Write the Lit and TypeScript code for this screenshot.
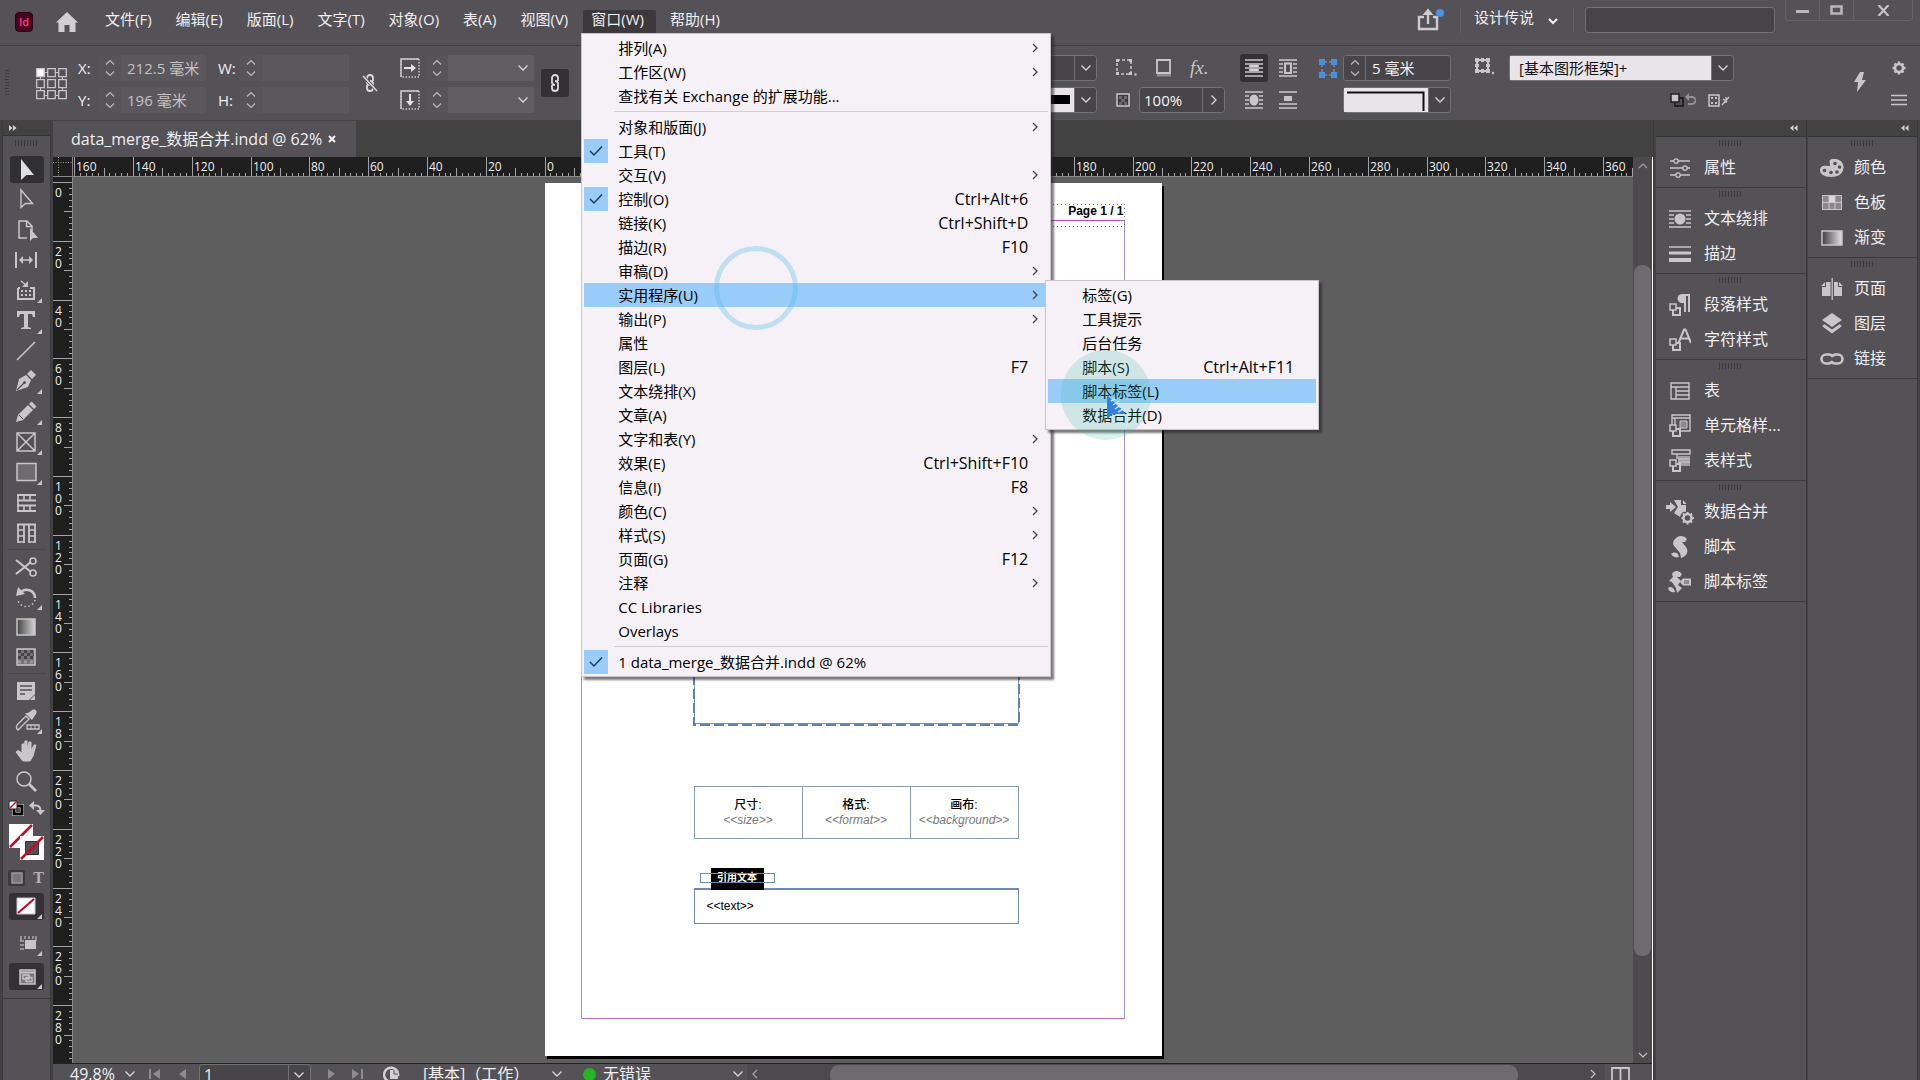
import { LitElement, html, svg, css, nothing, TemplateResult } from "lit";
import { customElement } from "lit/decorators.js";
import { classMap } from "lit/directives/class-map.js";

/* ---------- icons ---------- */
const icon = (w: number, h: number, body: unknown) =>
  html`<svg class="icon" width=${w} height=${h} viewBox="0 0 ${w} ${h}" fill="none" aria-hidden="true">${body}</svg>`;

const C = "#c9c6c9";
const chevDown = () => icon(12, 8, svg`<path d="M1.500 1.500 6 6 10.500 1.500" stroke="#d8d6d8" stroke-width="1.300"/>`);
const chevRight = () => icon(8, 12, svg`<path d="M1.500 1.500 6 6 1.500 10.500" stroke="#d8d6d8" stroke-width="1.300"/>`);
const steps = () => icon(10, 18, svg`<path d="M1 5.500 5 1.500 9 5.500M1 12.500 5 16.500 9 12.500" stroke="#bcbabc" stroke-width="1.200"/>`);
const menuArrow = () => icon(8, 10, svg`<path d="M2 1 6 5 2 9" stroke="#444" stroke-width="1.300"/>`);
const check = () => icon(14, 12, svg`<path d="M1 6 5 10 13 1.500" stroke="#1d3d5c" stroke-width="1.500"/>`);
const collapse = (flip = false) =>
  icon(8, 6, svg`<path d=${flip ? "M0 0 3.500 3 0 6ZM4 0 7.500 3 4 6Z" : "M3.500 0 0 3 3.500 6ZM7.500 0 4 3 7.500 6Z"} fill="#d5d3d5"/>`);
const corner = () => svg`<path d="M29 22V27H24Z" fill=${C}/>`;

const wrapLines = (mid: unknown) => svg`<path d="M0 1H18M0 17H18M0 5H4M14 5H18M0 9H4M14 9H18M0 13H4M14 13H18" stroke=${C} stroke-width="1.500"/>${mid}`;
const wrapOval = () => icon(18, 18, wrapLines(svg`<ellipse cx="9" cy="9" rx="4.500" ry="5.500" fill=${C}/>`));

/* overlapping squares used as a badge on every "style" panel icon */
const styleBadge = svg`<path d="M4 15H11V22H4Z" fill="#545256" stroke=${C} stroke-width="2"/><path d="M1 11H7V17H1Z" fill="#545256" stroke=${C} stroke-width="1.500"/>`;

const panelIcons: Record<string, TemplateResult> = {
  props: icon(22, 20, svg`<path d="M1 3H5M9 3H21M1 10H14M18 10H21M1 17H7M11 17H21" stroke=${C} stroke-width="1.300"/><circle cx="7" cy="3" r="2.200" stroke=${C} stroke-width="1.300"/><circle cx="16" cy="10" r="2.200" stroke=${C} stroke-width="1.300"/><circle cx="9" cy="17" r="2.200" stroke=${C} stroke-width="1.300"/>`),
  wrap: icon(22, 18, svg`<path d="M0 1H22M0 17H22M0 5H5M17 5H22M0 9H5M17 9H22M0 13H5M17 13H22" stroke=${C} stroke-width="1.500"/><circle cx="11" cy="9" r="5.500" fill=${C}/>`),
  stroke: icon(22, 16, svg`<path d="M0 1H22" stroke=${C} stroke-width="1.500"/><path d="M0 7H22" stroke=${C} stroke-width="3"/><path d="M0 14H22" stroke=${C} stroke-width="4"/>`),
  para: icon(22, 23, svg`<path d="M13 1H21V19H19V3H17V19H15V10H13A4.500 4.500 0 0 1 13 1Z" fill=${C}/>${styleBadge}`),
  char: icon(22, 23, svg`<path d="M9.500 15 15 1.500H16.500L22 15M11.500 10.500H20" stroke=${C} stroke-width="2"/>${styleBadge}`),
  table: icon(20, 18, svg`<path d="M1 1H19V17H1ZM1 5H19M6 5V17M6 9H19M6 13H19" stroke=${C} stroke-width="1.400"/>`),
  cell: icon(22, 23, svg`<path d="M3 1H21V17H3ZM3 4H21M6 4V17" stroke=${C} stroke-width="1.400"/><path d="M11 7H18V14H11Z" fill="#8b888b" stroke=${C}/>${styleBadge}`),
  tstyle: icon(22, 23, svg`<path d="M3 1H21V5H3ZM8 5V10" stroke=${C} stroke-width="1.400"/><path d="M9 7H21V17H9Z" fill="#a3a0a3"/><path d="M9 10H21M9 13H21" stroke=${C}/>${styleBadge}`),
  merge: icon(28, 26, svg`<path d="M0 6H4V3L10 8 4 13V10H0Z" fill=${C}/><path d="M8 1H15V6H20V13C17 12 15 14 14 18L8 14 12 8Z" fill=${C}/><path d="M17 1 20.500 5H17Z" fill=${C}/><circle cx="21.500" cy="19" r="4" stroke=${C} stroke-width="2.500"/><path d="M21.500 13V15M21.500 23V25.500M15.500 19H17.500M25.500 19H28M17 14.500 18.500 16M24.500 22 26 23.500M17 23.500 18.500 22M24.500 16 26 14.500" stroke=${C} stroke-width="2"/>`),
  script: icon(18, 22, svg`<path d="M4 3C7-1 13-1 16 3L14 6H11L15 11C18 15 16 20 10 22L9 17 4 11C1 8 2 5 4 3Z" fill=${C}/><path d="M0 18C2 16 5 16 7 18L8 21C5 22 2 21 0 18Z" fill=${C}/>`),
  slabel: icon(24, 22, svg`<path d="M4 3C6-1 11-1 14 3L12 6H9L13 10 10 14 14 17 9 22 8 17 4 11 1 10 5 6Z" fill=${C}/><path d="M0 17C2 15 4 16 6 18L7 21C4 22 1 21 0 17Z" fill=${C}/><path d="M12 11 15 7.500H23V14.500H15Z" fill=${C}/><path d="M16 10H21M16 12H21" stroke="#545256"/>`),
  color: icon(24, 18, svg`<path d="M12 0C19-1 24 3 23.500 9 23 15 18 18 11 18 4 18 0 15 0 11 0 7 4 6 8 7 11 7.500 10 5 9.500 3 9.200 1.500 10.500 .3 12 0Z" fill=${C}/><g fill="#545256"><circle cx="15" cy="4.500" r="1.800"/><circle cx="19.500" cy="8" r="1.800"/><circle cx="4.500" cy="11.500" r="1.800"/><circle cx="11" cy="13.500" r="1.800"/><circle cx="17" cy="13" r="1.800"/></g>`),
  swatch: icon(20, 15, svg`<path d="M.500.500H19.500V14.500H.500Z" fill="#8f858f" stroke=${C}/><path d="M7 1H13V7H7Z" fill="#dcd9dc"/><path d="M1 7.500H19M7 1V14M13 1V14" stroke=${C}/>`),
  gradient: icon(22, 16, svg`<defs><linearGradient id="pg"><stop offset="0" stop-color="#3f3e40"/><stop offset="1" stop-color="#e5e3e5"/></linearGradient></defs><path d="M1 1H21V15H1Z" fill="url(#pg)" stroke=${C} stroke-width="1.500"/>`),
  pages: icon(22, 22, svg`<path d="M5 4H9.500V18H1V9H5ZM13 4H17V9H21V18H13Z" fill=${C}/><path d="M4 4V8H0ZM18 4V8H22Z" fill=${C}/><path d="M11.200 0V22" stroke=${C} stroke-width="1.300"/>`),
  layers: icon(20, 21, svg`<path d="M10 0 20 7 10 14 0 7Z" fill=${C}/><path d="M0 13 2.500 11.300 10 16.500 17.500 11.300 20 13 10 20.500Z" fill=${C}/>`),
  links: icon(24, 12, svg`<path d="M13 4A4.500 4.500 0 0 0 9 1.500H6A4.500 4.500 0 0 0 6 10.500H9L11 9.500M11 8A4.500 4.500 0 0 0 15 10.500H18A4.500 4.500 0 0 0 18 1.500H15L12 3" stroke=${C} stroke-width="2.600"/>`),
};

const T = (body: unknown, flyout = false) =>
  html`<svg class="icon" width="34" height="28" viewBox="-3 0 34 28" fill="none" aria-hidden="true">${body}${flyout ? corner() : nothing}</svg>`;
/* tool glyphs are drawn around (13,14) */
const tools: Record<string, TemplateResult> = {
  select: T(svg`<path d="M8 3V24L13.500 19H21Z" fill="#e0dee0"/>`),
  direct: T(svg`<path d="M8 5V22.500L12.500 18.500H19.500Z" stroke=${C} stroke-width="1.400"/>`),
  page: T(svg`<path d="M14 22H6V5H14L19 10V15M13.500 5V10.500H19" stroke=${C} stroke-width="1.500"/><path d="M17 12V25L20 22H25Z" fill=${C}/>`),
  gap: T(svg`<path d="M3 6V22M23 6V22" stroke=${C} stroke-width="2"/><path d="M7 14H19" stroke=${C} stroke-width="1.500"/><path d="M6 14 10 10V18ZM20 14 16 10V18Z" fill=${C}/>`),
  collect: T(svg`<path d="M5 12V23H21V12H17M5 12H7" stroke=${C} stroke-width="2"/><path d="M8 5 13 9" stroke=${C} stroke-width="1.500"/><path d="M15 5V11H9Z" fill=${C}/><path d="M8 15H18M8 19H18" stroke=${C} stroke-width="2" stroke-dasharray="2 2"/>`, true),
  type: T(svg`<path d="M4 4H22V10H20L19 7H15V20L18 21V22H8V21L11 20V7H7L6 10H4Z" fill=${C}/>`, true),
  line: T(svg`<path d="M4 23 22 5" stroke=${C} stroke-width="1.600"/>`),
  pen: T(svg`<path d="M3 24 6 12 13 8 18 13 15 20Z" fill=${C}/><path d="M4 23 11 16" stroke="#545256" stroke-width="1.300"/><circle cx="11.500" cy="15.500" r="1.500" fill="#545256"/><path d="M14 7 18 3 23 8 19 12Z" fill=${C}/>`, true),
  pencil: T(svg`<path d="M3 24 5 17 15 7 20 12 10 22Z" fill=${C}/><path d="M16 6 18.500 3.500 23.500 8.500 21 11Z" fill=${C}/><path d="M6 17 10 21" stroke="#545256"/>`, true),
  frame: T(svg`<path d="M4 5H22V23H4ZM4 5 22 23M22 5 4 23" stroke=${C} stroke-width="1.500"/>`, true),
  rect: T(svg`<path d="M4 5.500H23V22.500H4Z" fill="#6f6a6f" stroke=${C} stroke-width="1.500"/>`, true),
  hgrid: T(svg`<path d="M4 6H23M4 11.500H23M4 16.500H23M4 22H23" stroke=${C} stroke-width="1.800"/><path d="M5 5V23M11 6V11M17 6V11M11 17V22M17 17V22" stroke=${C} stroke-width="1.600"/>`),
  vgrid: T(svg`<path d="M4 5.500H23" stroke=${C} stroke-width="2"/><path d="M5 5V24M11 5V24M16 5V24M22 5V24" stroke=${C} stroke-width="1.800"/><path d="M5 11H11M5 17H11M5 23H11M16 11H22M16 17H22M16 23H22" stroke=${C} stroke-width="1.500"/>`),
  scissors: T(svg`<path d="M3 7 18 19M3 21 18 9" stroke=${C} stroke-width="2.200"/><circle cx="20" cy="8" r="3" stroke=${C} stroke-width="1.600"/><circle cx="20" cy="20" r="3" stroke=${C} stroke-width="1.600"/>`),
  rotate: T(svg`<path d="M7 10C12 4 22 7 22 15" stroke=${C} stroke-width="2.500"/><path d="M3 13 5 4 12 11Z" fill=${C}/><path d="M22 17A9 9 0 0 1 5 18" stroke=${C} stroke-width="1.500" stroke-dasharray="1.500 2.500"/>`, true),
  grad: T(svg`<defs><linearGradient id="tg"><stop offset="0" stop-color="#444"/><stop offset="1" stop-color="#d5d3d5"/></linearGradient></defs><path d="M4 6H22V22H4Z" fill="url(#tg)" stroke=${C} stroke-width="1.500"/>`),
  feather: T(svg`<path d="M4 6H22V22H4Z" fill="#777478" stroke=${C} stroke-width="1.500"/><path d="M5 8.500H21M5 14.500H21" stroke="#454446" stroke-width="3" stroke-dasharray="3 3"/><path d="M8 11.500H21" stroke="#454446" stroke-width="3" stroke-dasharray="3 3"/><path d="M5 19H21" stroke="#b5b2b5" stroke-width="3" stroke-dasharray="3 3" opacity=".6"/>`),
  note: T(svg`<path d="M4 5H22V17L16 23H4Z" fill=${C}/><path d="M7 9H19M7 13H19M7 17H12" stroke="#545256" stroke-width="1.500"/><path d="M22 18V23H17Z" fill=${C}/>`),
  dropper: T(svg`<path d="M5 23C2 21 4 18 5 17L13 9 16 12 8 20C7 21 6 22 5 23Z" stroke=${C} stroke-width="1.400"/><path d="M12 6 19 13 23 7C25 3 21 1 18 4L15 6Z" fill=${C}/><path d="M14 18H26V22H14Z" stroke=${C} stroke-width="1.300"/><path d="M18 18V22M22 18V22" stroke=${C}/>`, true),
  hand: T(svg`<path d="M9 23 3 15 5 13.500 9 16V7H11V13L12 4H14V13L16 5H18V14L21 8H23L20 19 17 24H10Z" fill=${C} stroke=${C}/>`),
  zoom: T(svg`<circle cx="11" cy="12" r="7" stroke=${C} stroke-width="1.500"/><path d="M16 17 23 24" stroke=${C} stroke-width="2.800"/>`),
};

/* ---------- data ---------- */
interface Item { t?: string; k?: string; sub?: boolean; on?: boolean; hot?: boolean; sep?: boolean }
const windowMenu: Item[] = [
  { t: "排列(A)", sub: true }, { t: "工作区(W)", sub: true }, { t: "查找有关 Exchange 的扩展功能..." }, { sep: true },
  { t: "对象和版面(J)", sub: true }, { t: "工具(T)", on: true }, { t: "交互(V)", sub: true },
  { t: "控制(O)", k: "Ctrl+Alt+6", on: true }, { t: "链接(K)", k: "Ctrl+Shift+D" }, { t: "描边(R)", k: "F10" },
  { t: "审稿(D)", sub: true }, { t: "实用程序(U)", sub: true, hot: true }, { t: "输出(P)", sub: true }, { t: "属性" },
  { t: "图层(L)", k: "F7" }, { t: "文本绕排(X)" }, { t: "文章(A)" }, { t: "文字和表(Y)", sub: true },
  { t: "效果(E)", k: "Ctrl+Shift+F10" }, { t: "信息(I)", k: "F8" }, { t: "颜色(C)", sub: true }, { t: "样式(S)", sub: true },
  { t: "页面(G)", k: "F12" }, { t: "注释", sub: true }, { t: "CC Libraries" }, { t: "Overlays" }, { sep: true },
  { t: "1 data_merge_数据合并.indd @ 62%", on: true },
];
const utilMenu: Item[] = [
  { t: "标签(G)" }, { t: "工具提示" }, { t: "后台任务" }, { t: "脚本(S)", k: "Ctrl+Alt+F11" },
  { t: "脚本标签(L)", hot: true }, { t: "数据合并(D)" },
];
const menus = ["文件(F)", "编辑(E)", "版面(L)", "文字(T)", "对象(O)", "表(A)", "视图(V)", "窗口(W)", "帮助(H)"];
const dockA = [
  [["props", "属性"]],
  [["wrap", "文本绕排"], ["stroke", "描边"]],
  [["para", "段落样式"], ["char", "字符样式"]],
  [["table", "表"], ["cell", "单元格样..."], ["tstyle", "表样式"]],
  [["merge", "数据合并"], ["script", "脚本"], ["slabel", "脚本标签"]],
];
const dockB = [
  [["color", "颜色"], ["swatch", "色板"], ["gradient", "渐变"]],
  [["pages", "页面"], ["layers", "图层"], ["links", "链接"]],
];
const STEP = 58.8; /* distance between two labelled ruler marks (20 mm) */

@customElement("app-root")
export class AppRoot extends LitElement {
  static styles = css`
    :host { display: block; height: 100vh; overflow: hidden; color: #f0eef0; background: #545256;
      font: 15px/20px "Open Sans", "Noto Sans CJK SC", sans-serif; }
    * { box-sizing: border-box; }
    button, input, select { font: inherit; color: inherit; margin: 0; padding: 0; border: 0; background: none; border-radius: 0; }
    input { min-width: 0; outline: none; }
    select { appearance: none; outline: none; }
    ul { list-style: none; margin: 0; padding: 0; }
    svg { display: block; flex: none; }
    .app { position: relative; height: 100%; display: flex; flex-direction: column; overflow: hidden; }

    /* menu bar */
    .menubar { flex: none; height: 45px; display: flex; align-items: flex-start; background: #545256; padding-left: 15px; }
    .logo { width: 18px; height: 20px; margin-top: 12px; border-radius: 4px; background: #49021f; border: 1px solid #2c0113;
      color: #ff3c8c; font-size: 11px; line-height: 17px; font-weight: 600; text-align: center; }
    .home { margin: 11px 16px 0 22px; }
    .menus { display: flex; padding-top: 10px; }
    .menus > li { position: relative; }
    .top { display: block; height: 23px; padding: 0 10px 4px; margin-right: 4px; line-height: 19px; white-space: nowrap; }
    .top.open { background: #3b393c; border-radius: 2px 2px 0 0; padding: 0 12px 4px 8px; margin-left: 1px; }
    .spacer { flex: 1; }
    .vline { width: 1px; height: 25px; margin-top: 8px; background: #636165; }
    .share { margin: 8px 15px 0 0; }
    .who { display: flex; align-items: center; gap: 14px; margin: 7px 15px 0 13px; line-height: 20px; }
    .who svg { margin-top: 8px; }
    .search { width: 190px; height: 26px; margin: 7px 10px 0 11px; border: 1px solid #737174; border-radius: 3px; background: #464447; padding: 0 6px; }
    .win { display: flex; margin-right: 7px; border: 1px solid #656367; border-top: 0; border-radius: 0 0 4px 4px; height: 21px; }
    .win button { width: 34px; display: flex; align-items: center; justify-content: center; border-right: 1px solid #656367; }
    .win button:last-child { width: 58px; border: 0; }

    /* drop-down menus */
    .drop { position: absolute; z-index: 5; background: #f6f1f6; border: 1px solid #c9c4c9; padding: 2px; color: #000;
      box-shadow: 3px 3px 2px rgba(40, 35, 40, .6); }
    .drop.window { left: -1px; top: 23px; width: 470px; }
    .drop.util { left: 461px; top: -3px; width: 274px; }
    .drop li { position: relative; }
    .drop .row { display: flex; align-items: center; width: 100%; height: 24px; line-height: 24px; white-space: nowrap; text-align: left; }
    .drop .hot { background: #99ccf8; }
    .tick { width: 24px; height: 24px; margin-right: 10px; display: flex; align-items: center; justify-content: center; flex: none; }
    .tick.on { background: #99ccf8; }
    .name { flex: 1; }
    .keys { font-size: 16px; }
    .arrow { width: 20px; display: flex; justify-content: flex-end; padding-right: 9px; }
    .util .arrow { width: 22px; }
    .sep { height: 7px; padding: 3px 0 0 30px; }
    .sep::before { content: ""; display: block; height: 1px; background: #d3ced3; }

    /* control bar */
    .control { flex: none; height: 75px; display: flex; padding: 9px 13px 0 5px; border-top: 1px solid #414042; background: #545256; }
    .grip { width: 4px; height: 26px; margin: 15px 27px 0 0; background: repeating-linear-gradient(#3c3b3d 0 1px, transparent 1px 3px); }
    .ref { margin: 13px 11px 0 0; }
    .pair { display: grid; grid-template-rows: 26px 26px; gap: 6px; align-items: center; }
    .line { display: flex; align-items: center; height: 26px; }
    .line label { width: 21px; }
    .field { display: flex; height: 26px; flex: 1; background: #5a585c; border-radius: 2px; color: #c4c2c4; }
    .field .st { width: 22px; display: flex; align-items: center; justify-content: center; background: #565458; }
    .field input { flex: 1; width: 20px; padding-left: 6px; }
    .field .dd { width: 22px; display: flex; align-items: center; justify-content: center; }
    .boxed { border: 1px solid #717073; border-radius: 3px; background: #474548; color: #f5f3f5; }
    .boxed .dd { border-left: 1px solid #717073; }
    .boxed .st { background: none; border-right: 1px solid #717073; }
    .boxed select { flex: 1; min-width: 0; padding-left: 9px; }
    .boxed .light { background: #e8e4e9; color: #111; }
    .preview { flex: 1; display: flex; align-items: center; justify-content: flex-end; background: #e8e4e9; }
    .cell { width: 28px; height: 28px; display: flex; align-items: center; justify-content: center; border-radius: 3px; }
    .cell.on { background: #333134; }
    .w1 { width: 128px; margin-right: 12px; } .w2 { width: 131px; margin-right: 13px; } .w2 label { width: 22px; }
    .w3 { width: 134px; margin-right: 7px; } .w3 .icon { margin-right: 6px; } .w3 .dd .icon, .w3 .st .icon { margin: 0; }
    .w3 .field { background: #605e63; }
    .mid { margin: 18px 22px 0 0; } .chain { margin-top: 14px; }
    .stroke { width: 120px; margin-right: 17px; }
    .fx { width: 111px; margin-right: 15px; } .fx .icons { gap: 17px; padding-left: 2px; }
    .fx i { font-family: "Liberation Serif", serif; font-size: 19px; line-height: 20px; color: #c9c6c9; }
    .fx .op { padding-left: 2px; gap: 9px; } .fx input { padding-left: 4px; width: 50px; }
    .wraps { grid-template-columns: 28px 28px; margin-right: 14px; }
    .corners { width: 135px; margin-right: 21px; } .corners .line { gap: 6px; padding-left: 3px; } .corners .blank { width: 18px; }
    .fit { margin: 3px 14px 0 3px; }
    .obj { width: 225px; margin-right: 119px; } .obj .tiny { justify-content: flex-end; gap: 12px; padding-right: 4px; }
    .bolt { margin: 17px 24px 0 0; }
    .last { justify-items: center; }

    /* workspace */
    .work { flex: 1; min-height: 0; display: flex; background: #434243; }
    .toolbox { width: 49px; margin: 0 2px 0 2px; display: flex; flex-direction: column; background: #545256; border: 1px solid #3b3a3c; border-width: 0 1px; }
    .head { height: 16px; flex: none; display: flex; align-items: center; background: #434243; padding: 0 6px; border-bottom: 1px solid #353436; }
    .head.right { justify-content: flex-end; padding: 0 8px; height: 17px; }
    .hgrip { width: 24px; height: 6px; align-self: center; flex: none; background: repeating-linear-gradient(90deg, #3a393b 0 1px, transparent 1px 3px); }
    .toolbox .hgrip { margin: 4px 0 8px; }
    .tools { display: flex; flex-direction: column; align-items: center; justify-content: space-between; flex: none; }
    .tools.tall { height: 394px; }
    .tools button, .modes button { height: 30px; display: flex; align-items: center; justify-content: center; }
    .tools button.on { height: 27px; margin: 2px 0 1px; background: #302f31; border-radius: 3px; }
    .rule { height: 1px; margin: 1px 4px 2px; background: #49474a; flex: none; }
    .swap { display: flex; justify-content: space-between; padding: 4px 5px 0 5px; height: 28px; flex: none; }
    .fillstroke { align-self: center; }
    .modes { display: flex; justify-content: space-between; padding: 0 6px 0 5px; height: 16px; margin: 10px 0 7px; flex: none; }
    .modes button { width: 17px; height: 16px; background: #39383a; border-radius: 2px; }
    .modes b { font: bold 16px/16px "Liberation Serif", serif; color: #b5b2b5; }
    .big { width: 35px; height: 27px; align-self: center; background: #333134; border-radius: 3px; flex: none; }
    .foot { flex: 1; border-top: 1px solid #39383a; margin-top: 8px; }

    .doc { flex: 1; min-width: 0; display: flex; flex-direction: column; border-right: 1px solid #39383a; }
    .tabs { height: 37px; flex: none; display: flex; align-items: stretch; }
    .tab { display: flex; align-items: center; gap: 6px; padding: 0 20px 0 18px; margin-top: 1px; background: #545256; white-space: nowrap; font-size: 16px; line-height: 35px; }
    .view { flex: 1; min-height: 0; display: grid; grid-template: 20px minmax(0, 1fr) 17px / 20px minmax(0, 1fr) 19px; border-right: 1px solid #fff; }
    .origin { background: #1f1f20; border: 1px solid #8a888a; border-width: 0 1px 1px 0; }
    .ruler { background: #1f1f20; overflow: hidden; position: relative; }
    .ruler svg { width: 100%; height: 100%; }
    .ruler text { font: 12px "Open Sans", sans-serif; fill: #eee; }
    .vscroll { grid-column: 3; grid-row: 1 / 3; background: #4c4a4d; display: flex; flex-direction: column; align-items: center; padding: 6px 1px 5px; }
    .vthumb { flex: 690; width: 17px; border-radius: 8px; background: #6f6a6f; margin-top: 96px; }
    .vscroll .gap { flex: 96; }
    .canvas { background: #5e5e5e; overflow: hidden; display: flex; justify-content: center; align-items: flex-start; padding-top: 6px; min-width: 0; }

    /* page and its frames */
    .page { position: relative; flex: none; width: 617px; height: 873px; background: #fff; box-shadow: 2px 3px 0 #000; color: #000; font: 12px/14px "Liberation Sans", "Noto Sans CJK SC", sans-serif; }
    .page > * { position: absolute; }
    .margins { left: 36px; top: 37px; width: 544px; height: 799px; border: 1px solid #a093c9; border-top-color: #b84fc0; border-bottom-color: #b86cb8; }
    .folio { left: 36px; top: 21px; width: 544px; height: 23px; padding: 1px; text-align: right; font-weight: bold; line-height: 13px;
      background: repeating-linear-gradient(90deg, #777 0 1px, transparent 1px 4px) top / 100% 1px no-repeat,
        repeating-linear-gradient(90deg, #777 0 1px, transparent 1px 4px) bottom / 100% 1px no-repeat,
        repeating-linear-gradient(#777 0 1px, transparent 1px 4px) right / 1px 100% no-repeat; }
    .hero { left: 148px; top: 380px; }
    .meta { left: 149px; top: 603px; width: 325px; height: 53px; border-collapse: collapse; table-layout: fixed; border: 1px solid #6f88b0; }
    .meta td { border: 1px solid #8f9cb8; text-align: center; padding: 0 0 1px; color: #777; font-style: italic; white-space: nowrap; }
    .meta b { display: block; color: #000; font-style: normal; font-weight: 500; line-height: 15px; }
    .tag { left: 166px; top: 685px; width: 53px; height: 22px; background: #000; color: #fff; font-size: 10px; font-weight: bold; line-height: 20px; text-align: center; }
    .tagframe { left: 155px; top: 690px; width: 75px; height: 10px; border: 1px solid #6f88b0; }
    .quote { left: 149px; top: 705px; width: 325px; height: 36px; border: 1px solid #7088b4; border-top-width: 2px; padding: 9px 12px; }

    /* status bar */
    .status { grid-column: 1 / 4; display: flex; overflow: hidden; height: 17px; border-top: 1px solid #222; background: #545256; white-space: nowrap; }
    .status > * { height: 20px; }
    .info { display: flex; align-items: center; flex: none; width: 694px; padding-left: 17px; font-size: 16px; }
    .pageno { display: flex; align-items: center; align-self: flex-start; width: 112px; height: 22px; border: 1px solid #717073; border-radius: 3px; background: #474548; }
    .pageno input { flex: 1; padding-left: 4px; }
    .pageno button { width: 22px; height: 20px; display: flex; align-items: center; justify-content: center; border-left: 1px solid #717073; }
    .m1 { margin: 0 13px 0 9px; } .m2 { margin: 0 13px 0 18px; } .m3 { margin: 0 16px 0 17px; } .m4 { margin: 2px 22px 0 20px; }
    .ok { width: 13px; height: 13px; border-radius: 7px; background: #22b524; margin-right: 7px; }
    .preset { width: 128px; } .okname { width: 129px; } .m5 { margin-right: 20px; }
    .hscroll { flex: 1; display: flex; align-items: center; background: #4c4a4d; padding: 0 9px 0 5px; }
    .hthumb { flex: 688; height: 20px; border-radius: 9px; background: #6f6a6f; margin: 2px 0 0 72px; }
    .hscroll .gap { flex: 72; }
    .split { padding: 3px 22px 0 6px; }

    /* docks */
    .dock { display: flex; flex-direction: column; background: #545256; border-right: 1px solid #39383a; }
    .dock.a { width: 151px; margin-left: 2px; } .dock.b { width: 110px; margin-left: 1px; margin-right: 2px; }
    .group { display: flex; flex-direction: column; padding: 3px 0 2px; border-bottom: 1px solid #3b3a3c; }
    .group .hgrip { margin-bottom: 4px; }
    .group button { display: flex; align-items: center; height: 35px; font-size: 16px; line-height: 35px; text-align: left; white-space: nowrap; }
    .pi { width: 48px; display: flex; justify-content: center; }
    .b .pi { width: 46px; padding-left: 2px; }

    /* pointer effects */
    .ring { position: absolute; left: 714px; top: 246px; width: 84px; height: 84px; border: 5px solid rgba(90, 190, 235, .35); border-radius: 50%; z-index: 8; pointer-events: none; }
    .halo { position: absolute; left: 1061px; top: 350px; width: 90px; height: 90px; background: rgba(60, 190, 170, .2); border-radius: 50%; z-index: 8; pointer-events: none; }
    .pointer { position: absolute; left: 45px; top: 44px; }
  `;

  private row(i: Item): TemplateResult {
    if (i.sep) return html`<li class="sep" role="separator"></li>`;
    return html`<li>
      <button class=${classMap({ row: true, hot: !!i.hot })}>
        <span class=${classMap({ tick: true, on: !!i.on })}>${i.on ? check() : nothing}</span>
        <span class="name">${i.t}</span>${i.k ? html`<span class="keys">${i.k}</span>` : nothing}
        <span class="arrow">${i.sub ? menuArrow() : nothing}</span>
      </button>
      ${i.hot && i.sub ? html`<ul class="drop util">${utilMenu.map((u) => this.row(u))}</ul>` : nothing}
    </li>`;
  }

  private hRuler() {
    const marks = [];
    for (let n = -80; n <= 190; n++) {
      const x = Math.round(471.500 + (n * STEP) / 10) + 0.500;
      const y = n % 10 === 0 ? 0 : n % 5 === 0 ? 11 : 16;
      marks.push(svg`<path d="M${x} ${y}V20" stroke="#a5a3a5"/>`);
      if (n % 10 === 0) marks.push(svg`<text x=${Math.floor(x) + 2} y="14">${Math.abs(n * 2)}</text>`);
    }
    return html`<svg aria-hidden="true">${marks}<path d="M0 19.500H3000" stroke="#8a888a"/></svg>`;
  }

  private vRuler() {
    const marks = [];
    for (let n = 0; n <= 149; n++) {
      const y = Math.round(5 + (n * STEP) / 10) + 0.500;
      const x = n % 10 === 0 ? 0 : n % 5 === 0 ? 11 : 16;
      marks.push(svg`<path d="M${x} ${y}H20" stroke="#a5a3a5"/>`);
      if (n % 10 === 0)
        String(n * 2).split("").forEach((d, k) => marks.push(svg`<text x="2" y=${Math.round(y) + 14 + k * 12}>${d}</text>`));
    }
    return html`<svg aria-hidden="true">${marks}<path d="M19.500 0V3000" stroke="#8a888a"/></svg>`;
  }

  private field(id: string, label: string, value: string) {
    return html`<div class="line"><label for=${id}>${label}</label>
      <div class="field"><button class="st" aria-label="步进">${steps()}</button><input id=${id} .value=${value} /></div></div>`;
  }

  private scale(label: string, down: boolean) {
    return html`<div class="line">
      ${icon(20, 20, svg`<path d="M1 1H19V19H1Z" stroke=${C} stroke-width="1.500" stroke-dasharray="1.500 1.500"/><path d=${down ? "M1 19V1H19" : "M19 1H1V19"} stroke=${C} stroke-width="1.500"/><path d=${down ? "M10 4V12" : "M4 10H12"} stroke="#e5e3e5" stroke-width="2"/><path d=${down ? "M6 11H14L10 16Z" : "M11 6V14L16 10Z"} fill="#e5e3e5"/>`)}
      <div class="field"><button class="st" aria-label="步进">${steps()}</button><input aria-label=${label} /><button class="dd" aria-label="展开">${chevDown()}</button></div></div>`;
  }

  private dock(kind: string, groups: string[][][]) {
    return html`<aside class="dock ${kind}">
      <div class="head right">${collapse()}</div>
      ${groups.map((g) => html`<div class="group"><span class="hgrip"></span>
        ${g.map(([k, t]) => html`<button><span class="pi">${panelIcons[k]}</span>${t}</button>`)}</div>`)}
    </aside>`;
  }

  private toolset(names: string[]) {
    return names.map((n) => html`<button class=${classMap({ on: n === "select" })} aria-label=${n}>${tools[n]}</button>`);
  }

  private link(broken: boolean) {
    return icon(16, 20, svg`<path d="M5 8V5A3 3 0 0 1 11 5V8M5 8V9.500A3 3 0 0 0 8 12M11 12V15A3 3 0 0 1 5 15V12M11 12V10.500A3 3 0 0 0 8 8" stroke="#dddadd" stroke-width="1.800"/>${broken ? svg`<path d="M1 3 15 18" stroke="#545256" stroke-width="3"/><path d="M1 3 15 18" stroke="#dddadd" stroke-width="1.500"/>` : nothing}`);
  }

  private controlBar() {
    const sq = [0, 11, 22];
    return html`<div class="control">
      <span class="grip"></span>
      <div class="ref">${icon(31, 32, svg`<path d="M4 4.500H27M4 27.500H27M4.500 4V28M26.500 4V28" stroke=${C}/>${sq.map((y) => sq.map((x) => svg`<path d="M${x + 0.700} ${y + 0.700}h7.600v8h-7.600Z" fill=${x + y === 0 ? "#fff" : "#545256"} stroke=${C} stroke-width="1.300"/>`))}`)}</div>
      <div class="pair w1">${this.field("fx", "X:", "212.5 毫米")}${this.field("fy", "Y:", "196 毫米")}</div>
      <div class="pair w2">${this.field("fw", "W:", "")}${this.field("fh", "H:", "")}</div>
      <div class="mid">${this.link(true)}</div>
      <div class="pair w3">${this.scale("X 缩放", false)}${this.scale("Y 缩放", true)}</div>
      <button class="cell on chain" aria-label="约束缩放比例">${this.link(false)}</button>
      <span class="spacer"></span>
      <div class="pair stroke">
        <div class="field boxed"><input aria-label="描边粗细" /><button class="dd" aria-label="展开">${chevDown()}</button></div>
        <div class="field boxed"><span class="preview">${icon(80, 10, svg`<path d="M0 0H76V9H0Z" fill="#000"/>`)}</span><button class="dd" aria-label="描边类型">${chevDown()}</button></div>
      </div>
      <div class="pair fx">
        <div class="line icons">
          ${icon(22, 18, svg`<path d="M1 1H15V15H1Z" stroke=${C} stroke-width="1.500" stroke-dasharray="3 2"/><path d="M0 0H3V3H0ZM13 0H16V3H13ZM0 13H3V16H0ZM13 13H16V16H13Z" fill=${C}/><circle cx="19.500" cy="15.500" r="1.200" fill=${C}/>`)}
          ${icon(18, 18, svg`<path d="M2 16H16" stroke="#8f8c8f" stroke-width="3"/><path d="M2 1H15V14H2Z" fill="#545256" stroke=${C} stroke-width="1.800"/>`)}
          <i>fx.</i>
        </div>
        <div class="line op">
          ${icon(14, 14, svg`<path d="M1 1H13V13H1Z" fill="#3b3a3c" stroke=${C} stroke-width="1.500"/><path d="M3 3H6V6H3ZM8 3H11V6H8ZM5 6H9V9H5ZM3 9H6V12H3ZM8 9H11V12H8Z" fill="#6a686b"/>`)}
          <div class="field boxed"><input aria-label="不透明度" .value=${"100%"} /><button class="dd" aria-label="展开">${chevRight()}</button></div>
        </div>
      </div>
      <div class="pair wraps">
        <button class="cell on" aria-label="无文本绕排">${icon(18, 18, svg`<path d="M0 1H18M0 5H18M0 9H18M0 13H18M0 17H18" stroke=${C} stroke-width="1.500"/><path d="M5 4H13V14H5Z" fill="#aaa7aa"/><path d="M4 7H14M4 11H14" stroke="#e5e3e5" stroke-width="1.500"/>`)}</button>
        <button class="cell" aria-label="沿定界框绕排">${icon(18, 18, wrapLines(svg`<path d="M6 4.500H12V14H6Z" stroke=${C} stroke-width="2"/>`))}</button>
        <button class="cell" aria-label="沿对象形状绕排">${wrapOval()}</button>
        <button class="cell" aria-label="上下型绕排">${icon(18, 18, svg`<path d="M0 1H18M0 13H18M0 17H18" stroke=${C} stroke-width="1.500"/><path d="M5 5H13V10H5Z" fill=${C}/>`)}</button>
      </div>
      <div class="pair corners">
        <div class="line">
          ${icon(18, 19, svg`<path d="M3 5V14M15 5V14M5 3H13M5 16H13" stroke="#b39a93" stroke-dasharray="3 2"/><path d="M0 0H6V6H0ZM12 0H18V6H12ZM0 13H6V19H0ZM12 13H18V19H12Z" fill="#4a8fe0"/>`)}
          <div class="field boxed"><button class="st" aria-label="步进">${steps()}</button><input aria-label="转角大小" .value=${"5 毫米"} /></div>
        </div>
        <div class="line"><span class="blank"></span>
          <div class="field boxed"><span class="preview">${icon(84, 22, svg`<path d="M3 3.500H79.500V22" stroke="#111" stroke-width="2"/>`)}</span><button class="dd" aria-label="转角形状">${chevDown()}</button></div>
        </div>
      </div>
      <div class="fit">${icon(20, 18, svg`<path d="M2 2H13V13H2Z" stroke=${C} stroke-width="2"/><path d="M0 0H4V4H0ZM6 0H9V4H6ZM11 0H15V4H11ZM0 11H4V15H0ZM6 11H9V15H6ZM11 11H15V15H11ZM0 6H4V9H0ZM11 6H15V9H11Z" fill=${C}/><circle cx="18" cy="15" r="1.200" fill=${C}/>`)}</div>
      <div class="pair obj">
        <div class="field boxed"><select class="light" aria-label="对象样式"><option>[基本图形框架]+</option></select><span class="dd">${chevDown()}</span></div>
        <div class="line tiny">
          ${icon(26, 15, svg`<path d="M5 5H13V13H5Z" fill="#545256" stroke="#222" stroke-width="2"/><path d="M1 1H9V9H1Z" fill=${C} stroke="#222" stroke-width="1.500"/><path d="M17 4H22A3.500 3.500 0 0 1 22 11H18" stroke="#929092" stroke-width="1.800"/><path d="M19 0V8L15 4Z" fill="#929092"/>`)}
          ${icon(22, 13, svg`<path d="M1 1H11V12H1Z" stroke=${C} stroke-width="1.500"/><path d="M3 3H5V5H3ZM7 3H9V5H7ZM3 8H5V10H3ZM7 8H9V10H7Z" fill=${C}/><path d="M14 11 21 3M15 5L19 8M18 3V9" stroke=${C} stroke-width="1.300"/>`)}
        </div>
      </div>
      <div class="bolt">${icon(14, 20, svg`<path d="M7 0 1 10H5L4 20 13 8H9L11 0Z" fill=${C}/>`)}</div>
      <div class="pair last">
        ${icon(16, 16, svg`<circle cx="8" cy="8" r="4" stroke=${C} stroke-width="2.500"/><path d="M8 1.500V4M8 12V14.500M1.500 8H4M12 8H14.500M3.500 3.500 5 5M11 11 12.500 12.500M3.500 12.500 5 11M11 5 12.500 3.500" stroke=${C} stroke-width="2.400"/>`)}
        ${icon(16, 12, svg`<path d="M0 1.500H16M0 6H16M0 10.500H16" stroke=${C} stroke-width="1.500"/>`)}
      </div>
    </div>`;
  }

  render() {
    return html`<div class="app">
      <header class="menubar">
        <span class="logo">Id</span>
        <button class="home" aria-label="主页">${icon(24, 22, svg`<path d="M12 1 1 11.500H3.500V21H9.500V14H14.500V21H20.500V11.500H23Z" fill="#d2cfd2"/>`)}</button>
        <ul class="menus">${menus.map((m) => html`<li>
          <button class=${classMap({ top: true, open: m === "窗口(W)" })}>${m}</button>
          ${m === "窗口(W)" ? html`<ul class="drop window">${windowMenu.map((i) => this.row(i))}</ul>` : nothing}
        </li>`)}</ul>
        <span class="spacer"></span>
        <button class="share" aria-label="共享">${icon(28, 24, svg`<path d="M7 9H2V21H20V9H16" stroke="#cfccd0" stroke-width="2.400"/><path d="M11 5V16" stroke="#cfccd0" stroke-width="2.400"/><path d="M5.500 7 11 .500 16.500 7Z" fill="#cfccd0"/><circle cx="23" cy="5" r="4" fill="#4a8fe8"/>`)}</button>
        <span class="vline"></span>
        <button class="who">设计传说${icon(10, 7, svg`<path d="M1 1 5 5 9 1" stroke="#f0eef0" stroke-width="2"/>`)}</button>
        <span class="vline"></span>
        <input class="search" type="search" aria-label="搜索" />
        <div class="win">
          <button aria-label="最小化">${icon(13, 6, svg`<path d="M0 3H13V6H0Z" fill="#b9b7b9"/>`)}</button>
          <button aria-label="最大化">${icon(13, 11, svg`<path d="M1.500 1.500H11.500V8.500H1.500Z" stroke="#b9b7b9" stroke-width="2.500"/>`)}</button>
          <button aria-label="关闭">${icon(13, 11, svg`<path d="M1.500 0 11.500 11M11.500 0 1.500 11" stroke="#c5c3c5" stroke-width="2.200"/>`)}</button>
        </div>
      </header>

      ${this.controlBar()}

      <main class="work">
        <nav class="toolbox">
          <div class="head">${collapse(true)}</div>
          <span class="hgrip"></span>
          <div class="tools tall">${this.toolset(["select", "direct", "page", "gap", "collect", "type", "line", "pen", "pencil", "frame", "rect", "hgrid", "vgrid"])}</div>
          <div class="rule"></div>
          <div class="tools">${this.toolset(["scissors", "rotate", "grad", "feather"])}</div>
          <div class="rule"></div>
          <div class="tools">${this.toolset(["note", "dropper", "hand", "zoom"])}</div>
          <div class="swap">
            ${icon(16, 16, svg`<path d="M6 6H14V14H6Z" stroke="#fff" stroke-width="4"/><path d="M6 6H14V14H6Z" stroke="#000" stroke-width="3"/><path d="M1 1H9V9H1Z" fill="#fff" stroke="#222"/><path d="M1.500 8.500 8.500 1.500" stroke="#c8102e" stroke-width="1.500"/>`)}
            ${icon(16, 16, svg`<path d="M4 5.500H7Q11.500 5.500 11.500 11" stroke=${C} stroke-width="2"/><path d="M0 5.500 5 1V10ZM7 10H16L11.500 15Z" fill=${C}/>`)}
          </div>
          <svg class="fillstroke" width="35" height="36" viewBox="0 0 35 36" fill="none" aria-hidden="true">
            <path d="M0 0H24V24H0Z" fill="#fff"/><path d="M1 23 23 1" stroke="#c00d26" stroke-width="2.500"/>
            <path d="M11 12H35V36H11Z" fill="#fff"/><path d="M16.500 17.500H29.500V30.500H16.500Z" fill="#545256" stroke="#333"/><path d="M12 35 34 13" stroke="#c00d26" stroke-width="2.500"/>
          </svg>
          <div class="modes"><button aria-label="格式针对容器">${icon(12, 12, svg`<path d="M1 1H11V11H1Z" fill="#777" stroke="#9a989a" stroke-width="1.500"/>`)}</button><b>T</b></div>
          <button class="big" aria-label="应用无">${icon(35, 27, svg`<path d="M8 5H26V21H8Z" fill="#fff" stroke=${C}/><path d="M9 20 25 6" stroke="#c00d26" stroke-width="2.200"/><path d="M33 21V26H28Z" fill=${C}/>`)}</button>
          <button class="tools" aria-label="视图选项">${icon(35, 43, svg`<path d="M12 16V21M16 16V19M20 16V19M24 16V19M27 16V21M11 21H15M11 25H15M11 29H15" stroke="#aaa7aa" stroke-width="1.500"/><path d="M16 20H27V29H16Z" fill=${C}/><path d="M33 31V36H28Z" fill=${C}/>`)}</button>
          <button class="big" aria-label="屏幕模式">${icon(35, 27, svg`<path d="M11 7H26V21H11Z" fill="#777" stroke=${C} stroke-width="1.500"/><path d="M11 9.500H26" stroke=${C} stroke-width="2"/><path d="M14 12H20V16H14ZM17 14.500H23V18.500H17Z" stroke=${C} stroke-width="1.300"/><path d="M33 21V26H28Z" fill=${C}/>`)}</button>
          <div class="foot"></div>
        </nav>

        <section class="doc">
          <div class="tabs"><div class="tab">data_merge_数据合并.indd @ 62%<button aria-label="关闭标签">${icon(8, 8, svg`<path d="M1 1 7 7M7 1 1 7" stroke="#f5f3f5" stroke-width="2"/>`)}</button></div></div>
          <div class="view">
            <div class="origin">${icon(19, 19, svg`<path d="M5.500 0V19M0 5.500H19" stroke="#999" stroke-dasharray="1 1.500"/>`)}</div>
            <div class="ruler">${this.hRuler()}</div>
            <div class="vscroll">
              ${icon(10, 6, svg`<path d="M1 5 5 1 9 5" stroke="#a5a3a5" stroke-width="1.200"/>`)}
              <span class="vthumb"></span><span class="gap"></span>
              ${icon(10, 6, svg`<path d="M1 1 5 5 9 1" stroke="#c5c3c5" stroke-width="1.200"/>`)}
            </div>
            <div class="ruler">${this.vRuler()}</div>
            <div class="canvas"><div class="page">
              <div class="margins"></div>
              <div class="folio">Page 1 / 1</div>
              <svg class="hero" width="328" height="164" viewBox="0 0 328 164" fill="none" aria-hidden="true">
                <path d="M1.500 0V160.500H325.500V0" stroke="#6f8fc0"/>
                <path d="M1 0V162H326V0" stroke="#5f80b4" stroke-width="2" stroke-dasharray="10 4"/>
              </svg>
              <table class="meta"><tbody><tr><td><b>尺寸:</b>&lt;&lt;size&gt;&gt;</td><td><b>格式:</b>&lt;&lt;format&gt;&gt;</td><td><b>画布:</b>&lt;&lt;background&gt;&gt;</td></tr></tbody></table>
              <div class="quote">&lt;&lt;text&gt;&gt;</div>
              <div class="tag">引用文本</div>
              <div class="tagframe"></div>
            </div></div>
            <footer class="status">
              <div class="info">
                <span>49.8%</span><span class="m1">${chevDown()}</span>
                ${icon(12, 12, svg`<path d="M1 1V11" stroke="#8e8c8f" stroke-width="2"/><path d="M11 1V11L4 6Z" fill="#8e8c8f"/>`)}
                <span class="m2">${icon(7, 12, svg`<path d="M7 1V11L0 6Z" fill="#8e8c8f"/>`)}</span>
                <div class="pageno"><input aria-label="页码" .value=${"1"} /><button aria-label="页面列表">${chevDown()}</button></div>
                <span class="m3">${icon(7, 12, svg`<path d="M0 1V11L7 6Z" fill="#8e8c8f"/>`)}</span>
                ${icon(12, 12, svg`<path d="M11 1V11" stroke="#8e8c8f" stroke-width="2"/><path d="M1 1V11L8 6Z" fill="#8e8c8f"/>`)}
                <span class="m4">${icon(18, 18, svg`<path d="M5 15A7 7 0 1 1 15 10" stroke="#d2cfd2" stroke-width="2.500"/><path d="M7 4H12L15 7V13H7Z" fill="#d2cfd2"/><path d="M11 4V8H15" stroke="#545256"/>`)}</span>
                <span class="preset">[基本]（工作）</span><span class="m5">${chevDown()}</span>
                <span class="ok"></span><span class="okname">无错误</span>${chevDown()}
              </div>
              <div class="hscroll">${icon(6, 10, svg`<path d="M5 1 1 5 5 9" stroke="#a5a3a5" stroke-width="1.200"/>`)}
                <span class="hthumb"></span><span class="gap"></span>
                ${icon(6, 10, svg`<path d="M1 1 5 5 1 9" stroke="#c5c3c5" stroke-width="1.200"/>`)}</div>
              <div class="split">${icon(19, 16, svg`<path d="M1 1H18V15H1ZM9.500 1V15" stroke=${C} stroke-width="1.800"/>`)}</div>
            </footer>
          </div>
        </section>

        ${this.dock("a", dockA)}${this.dock("b", dockB)}
      </main>

      <div class="ring"></div>
      <div class="halo"><svg class="pointer" width="22" height="26" viewBox="0 0 22 26" aria-hidden="true"><path d="M1 1V25L7 20H20Z" fill="#2f80e0"/><path d="M5 7 9 5M7 11 13 7M9 15 16 10M12 18 19 14" stroke="#cfe4fa" stroke-width="1.500"/></svg></div>
    </div>`;
  }
}
